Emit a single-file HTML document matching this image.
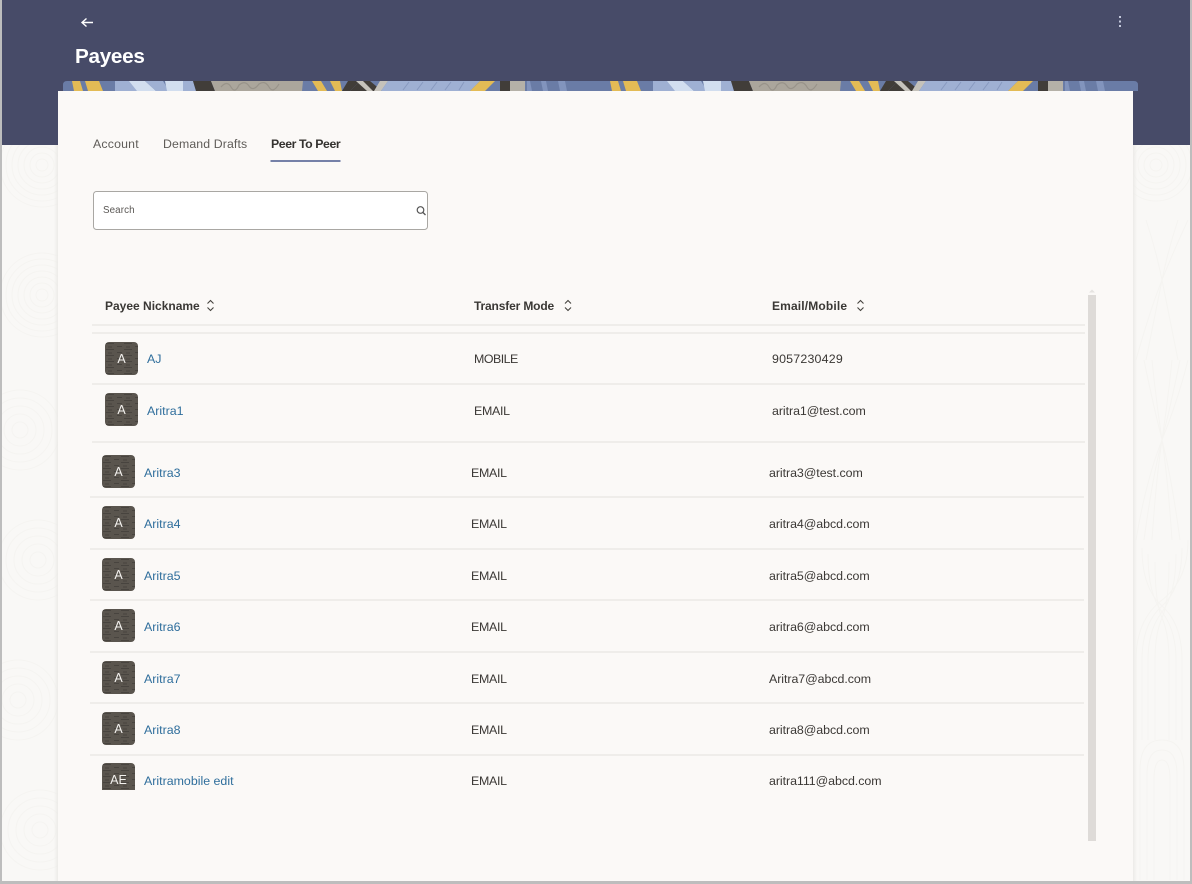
<!DOCTYPE html>
<html lang="en"><head><meta charset="utf-8"><title>Payees</title>
<style>
html,body{margin:0;padding:0;width:1192px;height:884px;overflow:hidden;background:#f9f8f6}
body{position:relative;font-family:"Liberation Sans",sans-serif;color:#3b3835}
.a{position:absolute}
.t{position:absolute;white-space:nowrap;line-height:16px;font-size:12.4px;filter:blur(.3px)}
.h{font-weight:bold;color:#3a3835;font-size:12px}
.l{color:#2f6e9c;margin-top:1px}
.u{letter-spacing:-.3px;margin-top:1px}
.e{letter-spacing:-.05px;margin-top:1px}
.line{position:absolute;height:2px;background:#efedea}
.av{position:absolute;width:33px;height:33px;border-radius:4px;overflow:hidden;background:#5a554e}
.av svg{position:absolute;left:0;top:0}
.av span{position:absolute;left:0;right:0;top:9px;text-align:center;color:#f3f1ee;font-size:12.500px;line-height:17px;filter:blur(.3px)}
</style></head><body>

<svg class="a" style="left:0;top:0" width="1192" height="884">
<defs>
<pattern id="d" width="18" height="6" patternUnits="userSpaceOnUse"><path d="M1 1.500h8M12 4.500h5M3 5h4" stroke="#48443f" stroke-width="1"/></pattern>
<linearGradient id="sl" x1="0" x2="1" y1="0" y2="0"><stop offset="0" stop-color="#ecebe8" stop-opacity="0"/><stop offset="1" stop-color="#ecebe8"/></linearGradient>
<linearGradient id="sr" x1="1" x2="0" y1="0" y2="0"><stop offset="0" stop-color="#ecebe8" stop-opacity="0"/><stop offset="1" stop-color="#ecebe8"/></linearGradient>
<g id="bn">
<rect width="538" height="10" fill="#6a7ca6"/>
<path d="M9 0h8l3 10h-9zM22 0h14l4 10h-15z" fill="#e3bb55"/>
<path d="M52 0h17l12 10H52z" fill="#9fb0d3"/>
<path d="M66 0h16l11 10H74z" fill="#d2deef"/>
<path d="M82 0h18l6 10H93z" fill="#9fb0d3"/>
<path d="M102 0h18l3 10h-19z" fill="#d2deef"/>
<path d="M120 0h10l3 10h-13z" fill="#9fb0d3"/>
<path d="M130 0h18l4 10h-19z" fill="#413d39"/>
<path d="M148 0h92l-1 10h-87z" fill="#aba69c"/>
<path d="M158 6q6-7 10 0t8-2q6-5 10 1t10-2q6-4 10 3t10-3" fill="none" stroke="#98938a" stroke-width="1.200"/>
<path d="M249 0h9l6 10h-9zM267 0h10l2 10h-7z" fill="#e3bb55"/>
<path d="M285 0h12l-10 10h-8z" fill="#413d39"/>
<path d="M297 0h10l12 10h-32z" fill="#413d39"/>
<path d="M293 0h7l10 10h-6z" fill="#c5c2bb"/>
<path d="M317 0h8l-7 10h-7z" fill="#c5c2bb"/>
<path d="M325 0h92l-10 10H318z" fill="#9fb0d3"/>
<path d="M340 9l6-8M354 9l6-8M368 9l6-8M382 9l6-8M396 9l5-8" stroke="#8899bf" stroke-width="1"/>
<path d="M417 0h15l-10 10h-15z" fill="#e3bb55"/>
<rect x="437" width="10" height="10" fill="#413d39"/>
<rect x="447" width="15" height="10" fill="#b5b1a8"/>
<path d="M464 0h3l2 10h-5zM478 0h5l2 10h-5zM495 0h7l2 10h-7z" fill="#8294bd"/>
</g>
<clipPath id="bc"><path d="M63 91V85q0-4 4-4H1134q4 0 4 4v6z"/></clipPath>
</defs>
<rect x="0" y="0" width="1192" height="884" fill="#f9f8f6"/>
<g fill="none" stroke="#f5f4f1" stroke-width="1">
<circle cx="42" cy="165" r="6"/><circle cx="42" cy="165" r="12"/><circle cx="42" cy="165" r="18"/><circle cx="42" cy="165" r="24"/><circle cx="42" cy="165" r="30"/><circle cx="42" cy="165" r="36"/><circle cx="42" cy="165" r="42"/>
<circle cx="42" cy="295" r="6"/><circle cx="42" cy="295" r="12"/><circle cx="42" cy="295" r="18"/><circle cx="42" cy="295" r="24"/><circle cx="42" cy="295" r="30"/><circle cx="42" cy="295" r="36"/><circle cx="42" cy="295" r="42"/>
<circle cx="20" cy="430" r="8"/><circle cx="20" cy="430" r="16"/><circle cx="20" cy="430" r="24"/><circle cx="20" cy="430" r="32"/><circle cx="20" cy="430" r="40"/>
<circle cx="38" cy="560" r="8"/><circle cx="38" cy="560" r="16"/><circle cx="38" cy="560" r="24"/><circle cx="38" cy="560" r="32"/><circle cx="38" cy="560" r="40"/>
<circle cx="18" cy="700" r="8"/><circle cx="18" cy="700" r="16"/><circle cx="18" cy="700" r="24"/><circle cx="18" cy="700" r="32"/><circle cx="18" cy="700" r="40"/>
<circle cx="40" cy="830" r="8"/><circle cx="40" cy="830" r="16"/><circle cx="40" cy="830" r="24"/><circle cx="40" cy="830" r="32"/><circle cx="40" cy="830" r="40"/>
<circle cx="1156" cy="165" r="6"/><circle cx="1156" cy="165" r="12"/><circle cx="1156" cy="165" r="18"/><circle cx="1156" cy="165" r="24"/><circle cx="1156" cy="165" r="30"/><circle cx="1156" cy="165" r="36"/>
<path d="M1140 880V770q0-30 22-30t22 30v110M1147 880V775q0-25 15-25t15 25v105M1154 880V780q0-20 8-20t8 20v100"/>
<path d="M1136 740V660q0-40 26-60t26-60M1142 740V660q0-36 20-54t20-58M1148 740V660q0-30 14-48t14-58M1155 740V660q0-26 7-42t7-56M1169 740V660q0-26-7-42t-7-56M1176 740V660q0-30-14-48t-14-58M1182 740V660q0-36-20-54t-20-58"/>
<path d="M1136 540q10-60 26-100t26-80M1144 540q8-60 18-100t18-80M1152 540q4-60 10-100t10-80M1172 540q-4-60-10-100t-10-80M1180 540q-8-60-18-100t-18-80"/>
<path d="M1136 360q14-50 26-80t26-60M1146 360q10-50 16-80t16-60M1178 360q-10-50-16-80t-16-60"/>
</g>
<rect x="2" y="0" width="1188" height="145" fill="#474b68"/>
<g clip-path="url(#bc)"><use href="#bn" x="63" y="81"/><use href="#bn" x="601" y="81"/></g>
<rect x="54" y="145" width="4" height="736" fill="url(#sl)"/>
<rect x="1133" y="145" width="4" height="736" fill="url(#sr)"/>
<rect x="58" y="91" width="1075" height="790" fill="#fbf9f7"/>
<rect x="0" y="0" width="2" height="884" fill="#bdbdbd"/>
<rect x="1190" y="0" width="2" height="884" fill="#bdbdbd"/>
<rect x="0" y="881" width="1192" height="3" fill="#bdbdbd"/>
<path d="M82 22.500h11M86.500 18.500l-4.500 4 4.500 4" fill="none" stroke="#fff" stroke-width="1.400"/>
<g fill="#c4c9dc"><rect x="1119" y="16" width="2" height="2"/><rect x="1119" y="20.500" width="2" height="2"/><rect x="1119" y="25" width="2" height="2"/></g>
<rect x="270.500" y="160" width="70" height="2" fill="#7581a8"/>
<rect x="93.500" y="191.500" width="334" height="38" rx="3" fill="#fff" stroke="#a9a7a3"/>
<circle cx="420.500" cy="210" r="3.300" fill="none" stroke="#555" stroke-width="1.200"/><path d="M423 212.500l2.500 2.500" stroke="#555" stroke-width="1.300"/>
<g fill="none" stroke="#45423e" stroke-width="1.100">
<path d="M207.500 303.500l3-3 3 3M207.500 307.500l3 3 3-3"/>
<path d="M565 303.500l3-3 3 3M565 307.500l3 3 3-3"/>
<path d="M857.500 303.500l3-3 3 3M857.500 307.500l3 3 3-3"/>
</g>
<path d="M1092 289.500l3 3h-6z" fill="#e6e4e1"/>
<rect x="1088" y="295" width="8" height="546" fill="#dedbd8"/>
</svg>

<div class="t" style="left:75px;top:44px;font-size:20.700px;line-height:26px;font-weight:bold;color:#fff;letter-spacing:-.3px">Payees</div>
<div class="t" style="left:93px;top:136px;color:#5f5c58;font-size:12.300px;letter-spacing:.2px">Account</div>
<div class="t" style="left:163px;top:136px;color:#5f5c58;font-size:12.300px;letter-spacing:.12px">Demand Drafts</div>
<div class="t" style="left:271px;top:136px;color:#34322f;font-size:12.300px;font-weight:bold;letter-spacing:-.42px">Peer To Peer</div>
<div class="t" style="left:103px;top:203px;color:#5a5754;font-size:9.800px;letter-spacing:.1px">Search</div>

<div class="t h" style="left:105px;top:298px">Payee Nickname</div>
<div class="t h" style="left:474px;top:298px;letter-spacing:-.15px">Transfer Mode</div>
<div class="t h" style="left:772px;top:298px;letter-spacing:.15px">Email/Mobile</div>

<div class="line" style="left:92px;top:324px;width:993px"></div>
<div class="line" style="left:92px;top:332px;width:993px"></div>
<div class="line" style="left:92px;top:383px;width:993px"></div>
<div class="line" style="left:92px;top:441px;width:993px"></div>
<div class="line" style="left:90px;top:496px;width:994px"></div>
<div class="line" style="left:90px;top:548px;width:994px"></div>
<div class="line" style="left:90px;top:599px;width:994px"></div>
<div class="line" style="left:90px;top:651px;width:994px"></div>
<div class="line" style="left:90px;top:702px;width:994px"></div>
<div class="line" style="left:90px;top:754px;width:994px"></div>

<div class="av" style="left:105px;top:342px"><svg width="33" height="33"><rect width="33" height="33" fill="url(#d)"/></svg><span>A</span></div>
<div class="t l" style="left:147px;top:350px">AJ</div><div class="t u" style="left:474px;top:350px;letter-spacing:-.5px">MOBILE</div><div class="t e" style="left:772px;top:350px;letter-spacing:.2px">9057230429</div>

<div class="av" style="left:105px;top:393px"><svg width="33" height="33"><rect width="33" height="33" fill="url(#d)"/></svg><span>A</span></div>
<div class="t l" style="left:147px;top:402px">Aritra1</div><div class="t u" style="left:474px;top:402px">EMAIL</div><div class="t e" style="left:772px;top:402px">aritra1@test.com</div>

<div class="av" style="left:102px;top:455px"><svg width="33" height="33"><rect width="33" height="33" fill="url(#d)"/></svg><span>A</span></div>
<div class="t l" style="left:144px;top:464px">Aritra3</div><div class="t u" style="left:471px;top:464px">EMAIL</div><div class="t e" style="left:769px;top:464px">aritra3@test.com</div>

<div class="av" style="left:102px;top:506px"><svg width="33" height="33"><rect width="33" height="33" fill="url(#d)"/></svg><span>A</span></div>
<div class="t l" style="left:144px;top:515px">Aritra4</div><div class="t u" style="left:471px;top:515px">EMAIL</div><div class="t e" style="left:769px;top:515px">aritra4@abcd.com</div>

<div class="av" style="left:102px;top:558px"><svg width="33" height="33"><rect width="33" height="33" fill="url(#d)"/></svg><span>A</span></div>
<div class="t l" style="left:144px;top:567px">Aritra5</div><div class="t u" style="left:471px;top:567px">EMAIL</div><div class="t e" style="left:769px;top:567px">aritra5@abcd.com</div>

<div class="av" style="left:102px;top:609px"><svg width="33" height="33"><rect width="33" height="33" fill="url(#d)"/></svg><span>A</span></div>
<div class="t l" style="left:144px;top:618px">Aritra6</div><div class="t u" style="left:471px;top:618px">EMAIL</div><div class="t e" style="left:769px;top:618px">aritra6@abcd.com</div>

<div class="av" style="left:102px;top:661px"><svg width="33" height="33"><rect width="33" height="33" fill="url(#d)"/></svg><span>A</span></div>
<div class="t l" style="left:144px;top:670px">Aritra7</div><div class="t u" style="left:471px;top:670px">EMAIL</div><div class="t e" style="left:769px;top:670px">Aritra7@abcd.com</div>

<div class="av" style="left:102px;top:712px"><svg width="33" height="33"><rect width="33" height="33" fill="url(#d)"/></svg><span>A</span></div>
<div class="t l" style="left:144px;top:721px">Aritra8</div><div class="t u" style="left:471px;top:721px">EMAIL</div><div class="t e" style="left:769px;top:721px">aritra8@abcd.com</div>

<div class="av" style="left:102px;top:763px;height:27px;border-radius:4px 4px 0 0"><svg width="33" height="33"><rect width="33" height="33" fill="url(#d)"/></svg><span>AE</span></div>
<div class="t l" style="left:144px;top:772px">Aritramobile edit</div><div class="t u" style="left:471px;top:772px">EMAIL</div><div class="t e" style="left:769px;top:772px">aritra111@abcd.com</div>

</body></html>
